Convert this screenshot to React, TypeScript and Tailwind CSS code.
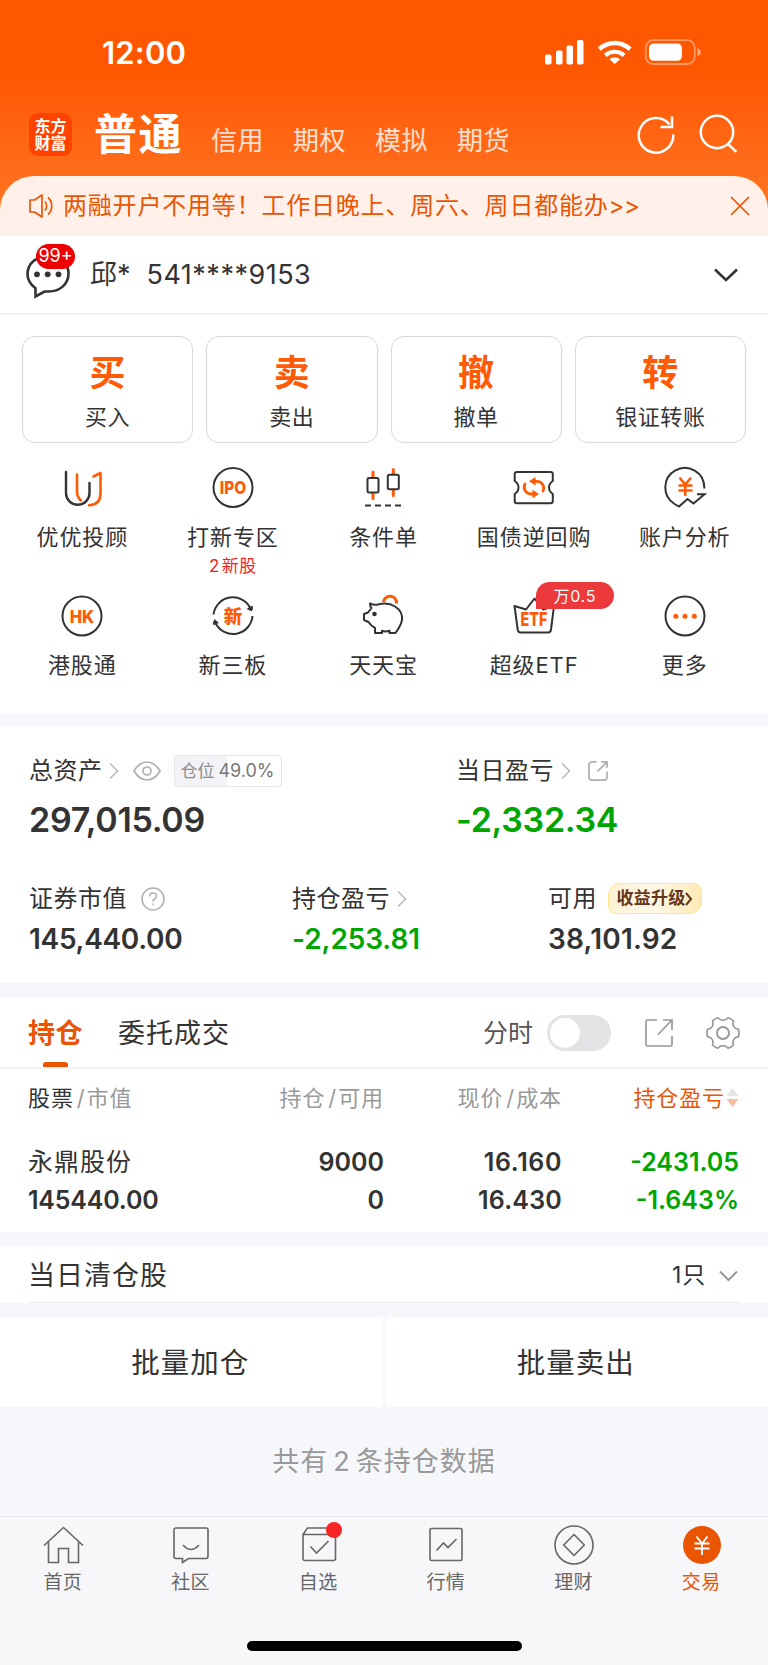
import type { ReactNode } from "react";
import clsx from "clsx";

type Tone = "dark" | "gray";

const ACCOUNT_TABS = ["信用", "期权", "模拟", "期货"];

const TRADE_ACTIONS = [
  { mark: "买", label: "买入" },
  { mark: "卖", label: "卖出" },
  { mark: "撤", label: "撤单" },
  { mark: "转", label: "银证转账" },
];

const DARK = "#333333";
const ORANGE = "#ff5a05";

/* ---------- 状态栏 ---------- */

function StatusBar() {
  return (
    <div className="flex h-[104px] items-center justify-between pl-[102px] pr-[66px] text-white">
      <span className="text-[31px] font-semibold leading-none tracking-[0.2px]">12:00</span>
      <svg width="157" height="28" viewBox="0 0 157 28" fill="none">
        <g fill="#fff">
          <rect x="0" y="16.500" width="6.500" height="10" rx="1.800" />
          <rect x="11" y="12.500" width="6.500" height="14" rx="1.800" />
          <rect x="21.500" y="7.500" width="6.500" height="19" rx="1.800" />
          <rect x="32" y="2" width="6.500" height="24.500" rx="1.800" />
          <path d="M69.700 26 L64.300 21.200 A8.300 8.300 0 0 1 75.100 21.200 Z" strokeLinejoin="round" />
        </g>
        <path d="M60.300 17.400 A14 14 0 0 1 79.100 17.400" stroke="#fff" strokeWidth="4.200" />
        <path d="M54.300 11.200 A22.300 22.300 0 0 1 85.100 11.200" stroke="#fff" strokeWidth="4.400" />
        <rect x="100.800" y="2.200" width="49" height="23.800" rx="7.500" stroke="#fff" strokeOpacity="0.400" strokeWidth="1.800" />
        <rect x="104" y="5.400" width="33" height="17.400" rx="4.800" fill="#fff" />
        <path d="M152.500 10 C156.800 11.300 156.800 17 152.500 18.200 Z" fill="#fff" fillOpacity="0.500" />
      </svg>
    </div>
  );
}

/* ---------- 图标 ---------- */

function RefreshIcon() {
  return (
    <svg width="40" height="40" viewBox="0 0 40 40" fill="none" stroke="#fff" strokeWidth="2.500">
      <path d="M38.300 20.500 A17.300 17.300 0 1 1 34.500 10.500" />
      <path d="M37 2.500 V13 H25.500" />
    </svg>
  );
}

function SearchIcon() {
  return (
    <svg width="40" height="40" viewBox="0 0 40 40" fill="none" stroke="#fff" strokeWidth="2.500">
      <circle cx="19" cy="18" r="16.200" />
      <path d="M30 30 L38.300 37.800" />
    </svg>
  );
}

function SpeakerIcon() {
  return (
    <svg width="24" height="24" viewBox="0 0 24 24" fill="none" stroke="#ea5504" strokeWidth="1.700" strokeLinejoin="round">
      <path d="M1 6 H5.500 L13 1 V23 L5.500 18 H1 Z" />
      <path d="M16 7.500 C18.200 10 18.200 14 16 16.500" />
      <path d="M19 3.500 C24 8 24 16 19 20.500" />
    </svg>
  );
}

function ChatIcon() {
  return (
    <svg width="46" height="48" viewBox="0 0 46 48" fill="none">
      <path
        d="M10.500 45.500 V37.300 C5.500 33.500 2.500 28.700 2.500 23 C2.500 12.500 11.500 5 23.500 5 C35 5 43.500 12.500 43.500 22.500 C43.500 33.500 34.500 40.500 23.500 40.500 H19.500 Z"
        stroke={DARK}
        strokeWidth="2.600"
      />
      <g fill={DARK}>
        <circle cx="12" cy="23.300" r="2.900" />
        <circle cx="22.700" cy="23.300" r="2.900" />
        <circle cx="33.500" cy="23.300" r="2.900" />
      </g>
    </svg>
  );
}

function ChevronRight() {
  return (
    <svg width="10" height="18" viewBox="0 0 10 18" fill="none" stroke="#b8b8bc" strokeWidth="1.500">
      <path d="M1 1.500 L8.500 9 L1 16.500" />
    </svg>
  );
}

function ExternalIcon({ size, rounded }: { size: number; rounded?: boolean }) {
  return (
    <svg width={size} height={size} viewBox="0 0 28 28" fill="none" stroke={rounded ? "#b0b0b0" : "#999"} strokeWidth={rounded ? 2.2 : 1.7}>
      {rounded ? (
        <>
          <path d="M12 2.500 H6.500 A4 4 0 0 0 2.500 6.500 V21.500 A4 4 0 0 0 6.500 25.500 H21.500 A4 4 0 0 0 25.500 21.500 V15" />
          <path d="M18 2.500 H25.500 V10 M25.500 2.500 L13.500 14.500" />
        </>
      ) : (
        <>
          <path d="M12 1 H2.500 Q1 1 1 2.500 V25.500 Q1 27 2.500 27 H25.500 Q27 27 27 25.500 V17" />
          <path d="M18 1 H27 V11 M26.500 1.500 L13 15.500" />
        </>
      )}
    </svg>
  );
}

function GearIcon() {
  return (
    <svg width="34" height="34" viewBox="0 0 34 34" fill="none" stroke="#999" strokeWidth="1.700" strokeLinejoin="round">
      <path d="M12 1.800 Q14 4.300 17 4.300 Q20 4.300 22 1.800 Q25.500 2.800 27.500 5 Q26.300 8 27.800 10.600 Q29.300 13 32.500 13.300 Q33.500 17 32.500 20.700 Q29.300 21 27.800 23.400 Q26.300 26 27.500 29 Q25.500 31.200 22 32.200 Q20 29.700 17 29.700 Q14 29.700 12 32.200 Q8.500 31.200 6.500 29 Q7.700 26 6.200 23.400 Q4.700 21 1.500 20.700 Q0.500 17 1.500 13.300 Q4.700 13 6.200 10.600 Q7.700 8 6.500 5 Q8.500 2.800 12 1.800 Z" />
      <circle cx="17" cy="17" r="6" strokeWidth="2" />
    </svg>
  );
}

function FeatureIcon({ children }: { children: ReactNode }) {
  return (
    <svg width="44" height="44" viewBox="0 0 44 44" fill="none" stroke={DARK} strokeWidth="2">
      {children}
    </svg>
  );
}

function MarkText({ y, size, width, children }: { y: number; size: number; width: number; children: string }) {
  return (
    <text
      x={22}
      y={y}
      fontSize={size}
      fontWeight="800"
      textAnchor="middle"
      textLength={width}
      lengthAdjust="spacingAndGlyphs"
      fill={ORANGE}
      stroke="none"
    >
      {children}
    </text>
  );
}

const FEATURES: { label: string; icon: ReactNode; note?: string; tag?: string }[] = [
  {
    label: "优优投顾",
    icon: (
      <FeatureIcon>
        <path d="M6 6 V27 A11.500 11.500 0 0 0 29.500 27 V17" strokeWidth="2.400" strokeLinecap="round" />
        <g stroke={ORANGE} strokeWidth="2.600" strokeLinecap="round" strokeLinejoin="round">
          <path d="M17 8.500 V25 Q17 31.500 21 34.500" />
          <path d="M33.500 10.500 L40.500 7 V27 Q40.500 39 29 39.300" />
        </g>
      </FeatureIcon>
    ),
  },
  {
    label: "打新专区",
    note: "2新股",
    icon: (
      <FeatureIcon>
        <circle cx="22" cy="21.500" r="19.500" />
        <MarkText y={28.300} size={18} width={26.500}>IPO</MarkText>
      </FeatureIcon>
    ),
  },
  {
    label: "条件单",
    icon: (
      <FeatureIcon>
        <g stroke={ORANGE} strokeWidth="3" strokeLinecap="round">
          <path d="M12 6 V32.500 M32.300 3.500 V29.500" />
        </g>
        <rect x="6.500" y="12" width="11" height="14.500" rx="1.500" fill="#fff" />
        <rect x="26.800" y="8.800" width="11" height="14.500" rx="1.500" fill="#fff" />
        <path d="M4 39.500 H40.500" strokeDasharray="6 4" strokeLinecap="butt" />
      </FeatureIcon>
    ),
  },
  {
    label: "国债逆回购",
    icon: (
      <FeatureIcon>
        <path
          d="M5 6 H38.500 Q40.800 6 40.800 8.300 V15 Q37 17.500 37 21.500 Q37 25.500 40.800 28 V35 Q40.800 37.300 38.500 37.300 H5 Q2.700 37.300 2.700 35 V28 Q6.500 25.500 6.500 21.500 Q6.500 17.500 2.700 15 V8.300 Q2.700 6 5 6 Z"
        />
        <g stroke={ORANGE} strokeWidth="2.800" strokeLinecap="round">
          <path d="M13 18 C10.800 22.500 13.500 28 19 28 H22" />
          <path d="M31 25 C33 20.500 30 15.300 25 15.300 H22" />
        </g>
        <path d="M17 15.300 L23.500 11 V19.500 Z M27 28 L20.500 23.700 V32.200 Z" fill={ORANGE} stroke="none" />
      </FeatureIcon>
    ),
  },
  {
    label: "账户分析",
    icon: (
      <FeatureIcon>
        <path d="M41.300 22.500 V21.500 A19.500 19.500 0 1 0 11.500 38 L16 40.500 L24.500 33 L30.500 37.500 L41.500 28.200 H34" />
        <path
          d="M17.300 12.500 L22.300 18.500 L27.300 12.500 M16.500 19.500 H28.500 M16.500 24.500 H28.500 M22.300 19 V29"
          stroke={ORANGE}
          strokeWidth="2.600"
          strokeLinecap="round"
        />
      </FeatureIcon>
    ),
  },
  {
    label: "港股通",
    icon: (
      <FeatureIcon>
        <circle cx="22" cy="22" r="19.500" />
        <MarkText y={28.800} size={18} width={24.500}>HK</MarkText>
      </FeatureIcon>
    ),
  },
  {
    label: "新三板",
    icon: (
      <FeatureIcon>
        <path d="M2.500 20.500 A19.500 19.500 0 0 1 39.500 14.500 M41.500 22 A19.500 19.500 0 0 1 4.500 29" />
        <path d="M41.500 11.500 L41 17.500 L35.500 15 Z M2 31 L3.500 25 L8 29 Z" fill={DARK} stroke="none" />
        <path d="M40.800 12.500 V16 M3.200 27 V30.500" />
        <MarkText y={28.800} size={18.500} width={18.500}>新</MarkText>
      </FeatureIcon>
    ),
  },
  {
    label: "天天宝",
    icon: (
      <FeatureIcon>
        <path
          d="M9 9.500 Q13 11.500 17 10.500 Q27 8 34 12.500 Q42 17.500 41 26 Q40 31.500 34.500 39 H28.500 V36.800 Q24 38 21 36.800 V39 H14 V34 Q10.500 32.500 7.500 28 L3 26 V20 L7 18.500 L10.500 14 Q9 12.500 9 9.500 Z"
          strokeLinejoin="round"
        />
        <circle cx="13.500" cy="20" r="2.300" fill={DARK} stroke="none" />
        <path d="M22.500 8 A6.400 6.400 0 0 1 35.500 9.500" stroke={ORANGE} strokeWidth="3" />
      </FeatureIcon>
    ),
  },
  {
    label: "超级ETF",
    tag: "万0.5",
    icon: (
      <FeatureIcon>
        <path
          d="M2.500 12 L14 15.500 L22.500 4.500 L31 15.500 L42 12 L39 35.500 Q38.800 38.500 36 38.500 H8.500 Q6 38.500 5.700 35.500 Z"
          strokeLinejoin="round"
        />
        <MarkText y={32.300} size={19} width={27}>ETF</MarkText>
      </FeatureIcon>
    ),
  },
  {
    label: "更多",
    icon: (
      <FeatureIcon>
        <circle cx="22" cy="22" r="19.500" />
        <g fill={ORANGE} stroke="none">
          <circle cx="12.800" cy="22.300" r="2.500" />
          <circle cx="22" cy="22.300" r="2.500" />
          <circle cx="31.300" cy="22.300" r="2.500" />
        </g>
      </FeatureIcon>
    ),
  },
];

const NAV: { label: string; icon: ReactNode; active?: boolean; dot?: boolean }[] = [
  {
    label: "首页",
    icon: <path d="M1 20.500 L20.500 2.500 L40 20.500 M5.500 17 V37.500 H15.500 V23.500 H25.500 V37.500 H35.500 V17" />,
  },
  {
    label: "社区",
    icon: (
      <>
        <path d="M5 3 H35 Q37 3 37 5 V31.500 Q37 33.500 35 33.500 H17.500 L11.500 37.500 V33.500 H5 Q3 33.500 3 31.500 V5 Q3 3 5 3 Z" />
        <path d="M12 20 Q20 29 28 20" />
      </>
    ),
  },
  {
    label: "自选",
    dot: true,
    icon: (
      <>
        <path d="M4 9.500 V33.500 Q4 35.500 6 35.500 H34.500 Q36.500 35.500 36.500 33.500 V9.500 Z M4 9.500 L8.500 3 H32 L36.500 9.500" />
        <path d="M11.500 21.500 L17.500 28 L29.500 16" />
      </>
    ),
  },
  {
    label: "行情",
    icon: (
      <>
        <rect x="4" y="3.500" width="32" height="32" rx="1.500" />
        <path d="M10.500 25.500 L17.500 18 L22 22.500 L30.500 14" />
      </>
    ),
  },
  {
    label: "理财",
    icon: (
      <>
        <circle cx="20" cy="20" r="19" />
        <path d="M20 9.500 L30.300 20 L20 30.500 L9.700 20 Z" strokeLinejoin="round" />
      </>
    ),
  },
  {
    label: "交易",
    active: true,
    icon: (
      <>
        <circle cx="20" cy="20" r="19" fill="#ea5504" stroke="none" />
        <path d="M14.500 11.500 L20 18.500 L25.500 11.500 M12.500 18.500 H27.500 M12.500 23.500 H27.500 M20 18.500 V30" stroke="#fff" strokeWidth="1.900" />
      </>
    ),
  },
];

/* ---------- 区块 ---------- */

function Header() {
  return (
    <header className="h-[236px] bg-linear-to-b from-[#ff5600] from-30% to-[#ff731f] to-85%">
      <StatusBar />
      <div className="flex h-[60px] items-center pl-[29px] pr-[30px] text-white">
        <div className="flex size-[43px] flex-col items-center justify-center gap-px rounded-[9px] bg-[#ff4200] text-[16px] font-bold leading-[16px]">
          <span>东方</span>
          <span>财富</span>
        </div>
        <span className="ml-[22px] text-[43px] font-bold leading-none tracking-[1.500px]">普通</span>
        <div className="ml-[28px] flex gap-[29px] pt-[13px] text-[26px] leading-none tracking-[0.500px] text-white/80">
          {ACCOUNT_TABS.map((tab) => (
            <span key={tab}>{tab}</span>
          ))}
        </div>
        <div className="ml-auto flex gap-[23px]">
          <RefreshIcon />
          <SearchIcon />
        </div>
      </div>
      <div className="mt-[11.500px] flex h-[60.500px] items-center rounded-t-[34px] bg-[#fff1ea] pl-[29px] pr-[18px] text-[#ea5504]">
        <SpeakerIcon />
        <span className="ml-[10px] text-[24px] leading-none tracking-[0.800px]">
          两融开户不用等！工作日晚上、周六、周日都能办<span className="tracking-[-0.500px]">&gt;&gt;</span>
        </span>
        <svg className="ml-auto" width="20" height="20" viewBox="0 0 20 20" stroke="#ea5504" strokeWidth="1.700">
          <path d="M1 1 L19 19 M19 1 L1 19" />
        </svg>
      </div>
    </header>
  );
}

function AccountRow() {
  return (
    <div className="flex h-[79px] items-center border-b-2 border-[#f2f2f3] bg-white pl-[25px] pr-[30px]">
      <div className="relative">
        <ChatIcon />
        <span className="absolute -top-[7px] left-[11px] flex h-[25px] w-[39px] items-center justify-center rounded-full bg-[#ee0000] text-[18px] leading-none text-white">
          99+
        </span>
      </div>
      <span className="ml-[19px] whitespace-pre text-[27px] leading-none">
        邱*<span className="ml-[16px] tracking-[0.500px]">541****9153</span>
      </span>
      <svg className="ml-auto" width="24" height="14" viewBox="0 0 24 14" fill="none" stroke={DARK} strokeWidth="2.600">
        <path d="M1 1.500 L12 12 L23 1.500" />
      </svg>
    </div>
  );
}

function QuickActions() {
  return (
    <div className="h-[399px] bg-white pt-[21px]">
      <div className="grid h-[107px] grid-cols-4 gap-[13px] px-[22px]">
        {TRADE_ACTIONS.map((action) => (
          <button key={action.label} className="flex flex-col items-center rounded-[13px] border border-[#d9d9db] pt-[17px]">
            <span className="text-[36px] font-bold leading-[38px] text-[#ff5a05]">{action.mark}</span>
            <span className="mt-[13px] text-[22px] leading-[24px] tracking-[0.600px]">{action.label}</span>
          </button>
        ))}
      </div>
      <div className="mt-[23px] grid grid-cols-5 grid-rows-[128px_119px] pl-[7px] pr-[8px]">
        {FEATURES.map((item) => (
          <div key={item.label} className="relative flex flex-col items-center">
            {item.icon}
            <span className="mt-[13px] text-[22px] leading-[28px] tracking-[0.900px]">{item.label}</span>
            {item.note && <span className="mt-[5px] text-[17px] leading-[20px] tracking-[0.500px] text-[#fa1d1d]">2<span className="ml-[2px]">{item.note.slice(1)}</span></span>}
            {item.tag && (
              <span className="absolute -top-[12px] left-[77px] flex h-[27px] w-[78px] items-center justify-center rounded-full rounded-bl-none bg-[#ec3a3c] text-[16px] leading-none tracking-[0.700px] text-white">
                {item.tag}
              </span>
            )}
          </div>
        ))}
      </div>
    </div>
  );
}

function Assets() {
  return (
    <div className="h-[256px] bg-white pt-[28px]">
      <div className="flex h-[32px] items-center text-[24px] leading-none tracking-[0.500px]">
        <div className="flex w-[456px] items-center pl-[29px]">
          <span>总资产</span>
          <span className="ml-[6px]">
            <ChevronRight />
          </span>
          <svg className="ml-[14px]" width="28" height="20" viewBox="0 0 28 20" fill="none" stroke="#b0b0b0" strokeWidth="1.700">
            <path d="M1 10 Q6.500 1 14 1 Q21.500 1 27 10 Q21.500 19 14 19 Q6.500 19 1 10 Z" />
            <circle cx="14" cy="10" r="4" />
          </svg>
          <span className="ml-[13px] flex h-[32px] w-[108px] items-center justify-center gap-[4px] rounded-[4px] border border-[#e6e6ea] bg-linear-to-r from-[#f3f3f7] from-49% to-white to-49% text-[18px] tracking-normal text-[#777]">
            <span className="text-[17px] text-[#8c8c8c]">仓位</span>49.0%
          </span>
        </div>
        <span>当日盈亏</span>
        <span className="ml-[7px]">
          <ChevronRight />
        </span>
        <span className="ml-[16px]">
          <ExternalIcon size={22} rounded />
        </span>
      </div>
      <div className="mt-[13px] flex h-[40px] items-center text-[34px] font-semibold leading-none tracking-[-0.300px]">
        <span className="w-[456px] pl-[29px]">297,015.09</span>
        <span className="text-[#00a500]">-2,332.34</span>
      </div>
      <div className="mt-[43px] grid h-[31px] grid-cols-[263px_256px_1fr] items-center pl-[29px] text-[24px] leading-none tracking-[0.500px]">
        <div className="flex items-center">
          证券市值
          <svg className="ml-[14px]" width="24" height="24" viewBox="0 0 24 24" fill="none" stroke="#b0b0b0" strokeWidth="1.500">
            <circle cx="12" cy="12" r="11" />
            <path d="M8.500 9.500 Q8.500 6 12 6 Q15.500 6 15.500 9 Q15.500 11 13.500 12 Q12 12.800 12 14.500 M12 16.500 V18.300" />
          </svg>
        </div>
        <div className="flex items-center">
          持仓盈亏
          <span className="ml-[7px]">
            <ChevronRight />
          </span>
        </div>
        <div className="flex items-center">
          可用
          <span className="ml-[11px] flex h-[31px] w-[94px] items-center justify-center rounded-[8px] rounded-br-[12px] rounded-tl-[12px] border border-[#fde68f] bg-linear-to-r from-[#fff3d6] via-[#fff8e6] to-[#fdeab4] text-[17px] font-bold tracking-[0.200px] text-[#65361c]">
            收益升级
            <svg width="8" height="14" viewBox="0 0 8 14" fill="none" stroke="#65361c" strokeWidth="2">
              <path d="M1 1 L6 7 L1 13" />
            </svg>
          </span>
        </div>
      </div>
      <div className="mt-[9px] grid h-[32px] grid-cols-[263px_256px_1fr] items-center pl-[29px] text-[28px] font-semibold leading-none">
        <span className="tracking-[-0.300px]">145,440.00</span>
        <span className="tracking-[-0.100px] text-[#00a500]">-2,253.81</span>
        <span className="tracking-[0.200px]">38,101.92</span>
      </div>
    </div>
  );
}

function HeadPair({ first, second, tone = "gray" }: { first: string; second: string; tone?: Tone }) {
  return (
    <span>
      <span className={clsx(tone === "dark" && "text-[#333]")}>{first}</span>
      <span className="ml-[3px] mr-px">/</span>
      {second}
    </span>
  );
}

function Holdings() {
  return (
    <div className="h-[235px] bg-white">
      <div className="flex h-[72px] items-center border-b-2 border-[#f3f3f5] pl-[28px] pr-[28px] pt-px text-[27px] leading-none">
        <div className="relative flex h-full items-center font-bold tracking-[0.500px] text-[#ea5504]">
          <span className="pt-[2px]">持仓</span>
          <span className="absolute bottom-0 left-[15px] h-[5px] w-[25px] rounded-t-[3px] bg-[#ea5504]" />
        </div>
        <span className="ml-[35px] pt-[2px] tracking-[1px]">委托成交</span>
        <span className="ml-auto pt-[2px] text-[25px] text-[#555]">分时</span>
        <span className="ml-[14px] flex h-[36px] w-[64px] items-center rounded-full bg-[#e3e3e5] px-[3px]">
          <span className="size-[30px] rounded-full bg-white" />
        </span>
        <span className="ml-[34px]">
          <ExternalIcon size={28} />
        </span>
        <span className="ml-[33px]">
          <GearIcon />
        </span>
      </div>
      <div className="grid grid-cols-[230px_126px_178px_1fr] pl-[28px] pr-[29px]">
        <div className="col-span-4 grid h-[57px] grid-cols-subgrid items-center text-right text-[22px] leading-none tracking-[0.900px] text-[#999]">
          <span className="text-left">
            <HeadPair first="股票" second="市值" tone="dark" />
          </span>
          <HeadPair first="持仓" second="可用" />
          <HeadPair first="现价" second="成本" />
          <span className="flex items-center justify-end text-[#ea5504]">
            持仓盈亏
            <svg className="ml-px" width="13" height="22" viewBox="0 0 13 22">
              <path d="M6.500 1 L12.500 9 H0.500 Z" fill="#e4e4e6" />
              <path d="M6.500 20 L12.500 12 H0.500 Z" fill="#f6bd9c" />
            </svg>
          </span>
        </div>
        <div className="col-span-4 mt-[17px] grid h-[38px] grid-cols-subgrid items-center text-right text-[25px] font-semibold leading-none">
          <span className="text-left font-normal tracking-[1px]">永鼎股份</span>
          <span>9000</span>
          <span className="tracking-[0.600px]">16.160</span>
          <span className="text-[#00a500]">-2431.05</span>
        </div>
        <div className="col-span-4 grid h-[38px] grid-cols-subgrid items-center text-right text-[25px] font-semibold leading-none">
          <span className="text-left tracking-[-0.200px]">145440.00</span>
          <span>0</span>
          <span className="tracking-[0.200px]">16.430</span>
          <span className="text-[#00a500]">-1.643%</span>
        </div>
      </div>
    </div>
  );
}

function Batch() {
  return (
    <>
      <div className="mt-[14px] h-[57px] bg-white px-[28px]">
        <div className="flex h-full items-center border-b border-[#ececee] pt-[3px] text-[27px] leading-none">
          <span className="tracking-[1px]">当日清仓股</span>
          <span className="ml-auto text-[23px] tracking-[0.800px]">1只</span>
          <svg className="ml-[13px] mr-[2px]" width="19" height="12" viewBox="0 0 19 12" fill="none" stroke="#999" strokeWidth="2">
            <path d="M1 1.500 L9.500 10 L18 1.500" />
          </svg>
        </div>
      </div>
      <div className="mt-[14px] grid h-[90px] grid-cols-2 gap-[3px] text-[28.500px] leading-none tracking-[1px]">
        <button className="bg-white pr-[2px] pt-[3px]">批量加仓</button>
        <button className="bg-white pr-[2px] pt-[3px]">批量卖出</button>
      </div>
      <p className="flex h-[109px] items-center justify-center text-[27px] leading-none tracking-[1px] text-[#999]">
        共有<span className="mx-[5px]">2</span>条持仓数据
      </p>
    </>
  );
}

function BottomNav() {
  return (
    <nav className="flex h-[149px] flex-col border-t border-[#e6ecee] bg-[#f7f7fa]">
      <div className="grid grid-cols-6 pr-[2px] pt-[8px]">
        {NAV.map((item) => (
          <div
            key={item.label}
            className={clsx("relative flex flex-col items-center", item.active ? "text-[#ea5504]" : "text-[#666]")}
          >
            <svg width="41" height="40" viewBox="0 0 41 40" fill="none" stroke="currentColor" strokeWidth="1.600">
              {item.icon}
            </svg>
            <span className="mt-[8px] pr-[2px] text-[19px] leading-[20px] tracking-[0.300px]">{item.label}</span>
            {item.dot && <span className="absolute -top-[3px] left-[71px] size-[16px] rounded-full bg-[#f72525]" />}
          </div>
        ))}
      </div>
      <div className="mx-auto mb-[14px] mt-auto h-[10px] w-[275px] rounded-full bg-black" />
    </nav>
  );
}

export default function App() {
  return (
    <div className="h-[1665px] w-[768px] overflow-hidden bg-[#f6f7fa] font-['Inter','Noto_Sans_CJK_SC',sans-serif] text-[#333]">
      <Header />
      <AccountRow />
      <QuickActions />
      <div className="h-[13px]" />
      <Assets />
      <div className="h-[14px]" />
      <Holdings />
      <Batch />
      <BottomNav />
    </div>
  );
}
